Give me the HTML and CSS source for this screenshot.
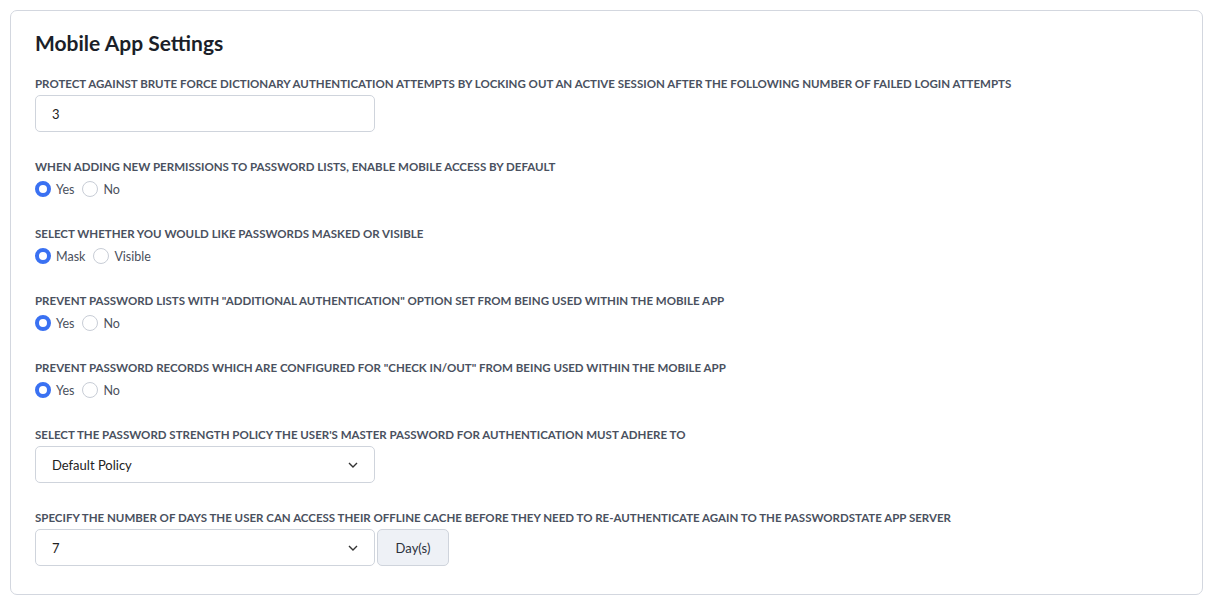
FILE: index.html
```html
<!DOCTYPE html>
<html lang="en">
<head>
  <meta charset="utf-8" />
  <title>Mobile App Settings</title>
  <link rel="stylesheet" href="styles.css">
</head>
<body>
  <div class="card">
    <h2 class="card-title">Mobile App Settings</h2>

    <div class="form-group">
      <label class="form-label">Protect against brute force dictionary authentication attempts by locking out an active session after the following number of failed login attempts</label>
      <input class="form-control" type="text" value="3">
    </div>

    <div class="form-group">
      <label class="form-label">When adding new permissions to password lists, enable mobile access by default</label>
      <div class="radio-row">
        <label class="radio"><span class="dot checked"></span>Yes</label>
        <label class="radio"><span class="dot"></span>No</label>
      </div>
    </div>

    <div class="form-group">
      <label class="form-label">Select whether you would like passwords masked or visible</label>
      <div class="radio-row">
        <label class="radio"><span class="dot checked"></span>Mask</label>
        <label class="radio"><span class="dot"></span>Visible</label>
      </div>
    </div>

    <div class="form-group">
      <label class="form-label">Prevent password lists with "Additional Authentication" option set from being used within the mobile app</label>
      <div class="radio-row">
        <label class="radio"><span class="dot checked"></span>Yes</label>
        <label class="radio"><span class="dot"></span>No</label>
      </div>
    </div>

    <div class="form-group">
      <label class="form-label">Prevent password records which are configured for "Check In/Out" from being used within the mobile app</label>
      <div class="radio-row">
        <label class="radio"><span class="dot checked"></span>Yes</label>
        <label class="radio"><span class="dot"></span>No</label>
      </div>
    </div>

    <div class="form-group">
      <label class="form-label">Select the password strength policy the user's master password for authentication must adhere to</label>
      <div class="select">
        <span>Default Policy</span>
        <svg class="chevron" width="10" height="6" viewBox="0 0 10 6"><path d="M1 1l4 4 4-4" fill="none" stroke="#333" stroke-width="1.4"/></svg>
      </div>
    </div>

    <div class="form-group">
      <label class="form-label">Specify the number of days the user can access their offline cache before they need to re-authenticate again to the Passwordstate App Server</label>
      <div class="input-group">
        <div class="select">
          <span>7</span>
          <svg class="chevron" width="10" height="6" viewBox="0 0 10 6"><path d="M1 1l4 4 4-4" fill="none" stroke="#333" stroke-width="1.4"/></svg>
        </div>
        <span class="addon">Day(s)</span>
      </div>
    </div>
  </div>
</body>
</html>
```

FILE: styles.css
```css
body {
	margin: 0;
	padding: 10px 14px 11px 10px;
	background: #fff;
	font-family: "Lato", "Liberation Sans", sans-serif;
	color: #2b303b;
}
.card {
	border: 1px solid #d3d7df;
	border-radius: 7px;
	padding: 19px 24px 1px 24px;
}
.card-title {
	margin: 0 0 20px 0;
	font-size: 21px;
	line-height: 26px;
	font-weight: 700;
	color: #1b1f29;
}
.form-group {
	margin-bottom: 27px;
}
.form-label {
	display: block;
	font-size: 11.5px;
	line-height: 16px;
	font-weight: 700;
	text-transform: uppercase;
	color: #4a5160;
	margin-bottom: 3px;
}
.form-control,
.select {
	box-sizing: border-box;
	width: 340px;
	height: 37px;
	border: 1px solid #cfd4dc;
	border-radius: 5px;
	padding: 0 16px;
	font-family: inherit;
	font-size: 13px;
	color: #222;
	background: #fff;
}
.select {
	display: flex;
	align-items: center;
	justify-content: space-between;
}
.radio-row {
	display: flex;
	gap: 8px;
	height: 20px;
	align-items: center;
	margin-top: 4px;
}
.radio {
	display: flex;
	align-items: center;
	gap: 5px;
	font-size: 12.5px;
	color: #4a505c;
}
.dot {
	box-sizing: border-box;
	width: 16px;
	height: 16px;
	border-radius: 50%;
	border: 1px solid #c8cdd6;
	background: #fff;
}
.dot.checked {
	border: 4.5px solid #3a71f2;
}
.input-group {
	display: flex;
	gap: 2px;
}
.addon {
	box-sizing: border-box;
	width: 72px;
	height: 37px;
	display: flex;
	align-items: center;
	justify-content: center;
	background: #eef1f6;
	border: 1px solid #cfd4dc;
	border-radius: 5px;
	font-size: 13px;
	color: #2b303b;
}
```
